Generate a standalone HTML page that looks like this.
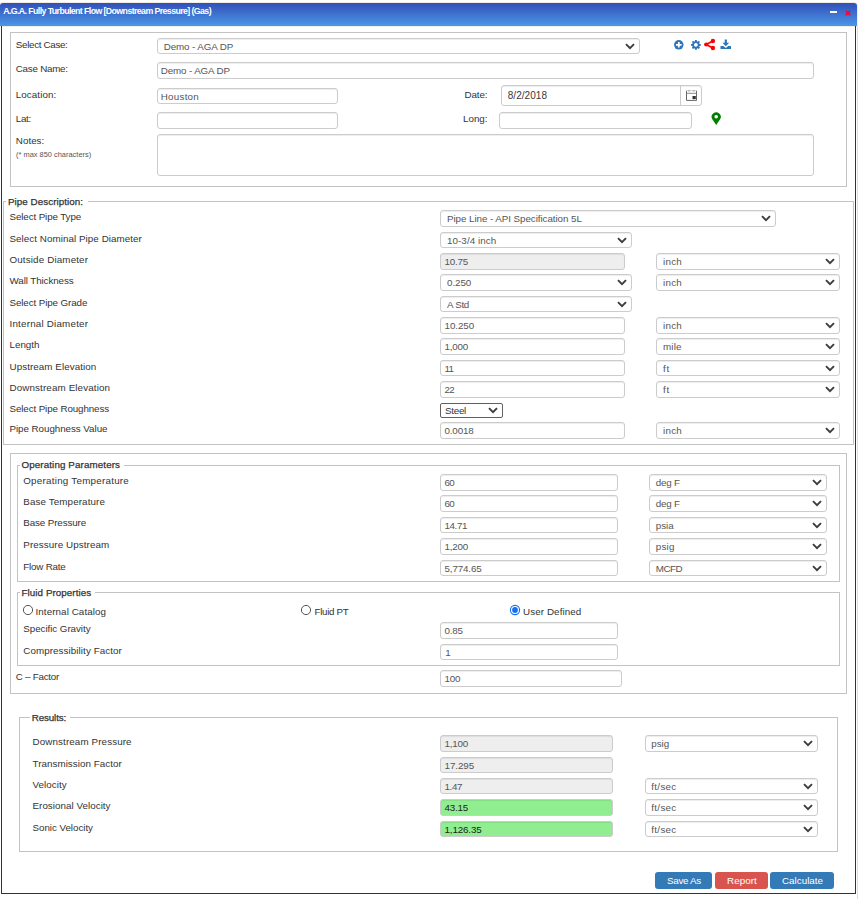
<!DOCTYPE html>
<html><head><meta charset="utf-8"><title>A.G.A. Fully Turbulent Flow</title><style>
html,body{margin:0;padding:0;background:#fff}
body{width:860px;height:899px;position:relative;overflow:hidden;font-family:"Liberation Sans",sans-serif;font-size:9.8px;line-height:12px;color:#333}
div,span,svg{position:absolute;box-sizing:border-box}
.t{white-space:nowrap;height:12px}
.lg{-webkit-text-stroke:0.25px #333}
.lgbg{height:1px;background:#fff}
.fs{border:1px solid #c3c3c3}
.in{border:1px solid #ccc;border-radius:3px;background:#fff;box-shadow:inset 0 1px 1px rgba(0,0,0,.075);overflow:hidden}
.in .v{white-space:nowrap;color:#555;height:12px}
.dis{background:#eee}
.grn{background:#90ee90}
.grn .v{color:#222}
.sm{border-color:#606060;border-radius:2px;box-shadow:none}
.sm .v{color:#333}
.se .cv{right:4.5px;top:4.4px}
.sm .cv{top:2.6px;right:4px}
.dv{left:178px;top:-1px;width:1px;height:22px;background:#ccc}
#tb{left:0;top:3px;width:857px;height:23px;border-radius:3px 3px 0 0;background:linear-gradient(#3250b8,#4b97e8);box-shadow:0 0 0 1px rgba(226,220,206,.55)}
#mn{left:830px;top:8px;width:7px;height:2px;background:#fff}
#cx{left:845px;top:6.6px}
#win{left:1px;top:26px;width:855px;height:868px;border:1px solid #333;border-top:none}
#gl{left:857px;top:26px;width:1px;height:873px;background:#dcdcdc}
.bt{top:872px;height:17px;border-radius:3px;color:#fff;text-align:center;font-size:10.6px;line-height:17px;white-space:nowrap}
.rd{overflow:visible}
</style></head><body>
<div id="tb"><div id="mn"></div><svg id="cx" viewBox="0 0 6 6" width="6" height="6"><path d="M0.9 0.9 L5.1 5.1 M5.1 0.9 L0.9 5.1" stroke="#ff0033" stroke-width="1.9" fill="none"/></svg></div>
<div id="win"></div>
<div class="t " style="left:3.2px;letter-spacing:-0.6px;top:5.3px;font-size:8.8px;color:#fff;font-weight:bold">A.G.A. Fully Turbulent Flow [Downstream Pressure] (Gas)</div>
<div id="gl"></div>
<div class="fs" style="left:10px;top:32px;width:837px;height:155px"></div>
<div class="t " style="left:15.8px;letter-spacing:-0.32px;top:38.8px">Select Case:</div>
<div class="in se" style="left:157px;top:38px;width:483px;height:16px"><span class="v" style="left:5.75px;top:1.8px;letter-spacing:-0.11px">Demo - AGA DP</span><svg class="cv" viewBox="0 0 10 7" width="10" height="7"><path d="M1 1.2 L5 5.2 L9 1.2" fill="none" stroke="#3c3c3c" stroke-width="1.9"/></svg></div>
<div class="t " style="left:15.8px;letter-spacing:-0.25px;top:62.8px">Case Name:</div>
<div class="in" style="left:157px;top:62px;width:657px;height:17px"><span class="v" style="left:2.8px;top:1.8px;letter-spacing:-0.13px">Demo - AGA DP</span></div>
<div class="t " style="left:15.8px;letter-spacing:0.08px;top:88.8px">Location:</div>
<div class="in" style="left:157px;top:88px;width:181px;height:16px"><span class="v" style="left:2.8px;top:1.8px;letter-spacing:0.24px">Houston</span></div>
<div class="t " style="right:372.5px;letter-spacing:-0.11px;margin-right:0.11px;top:88.8px">Date:</div>
<div class="in" style="left:501px;top:85px;width:201px;height:21px"><span class="v" style="font-size:10px;color:#383838;left:5.7px;top:3.8px;letter-spacing:0.05px">8/2/2018</span><div class="dv"></div></div>
<div class="t " style="left:15.8px;letter-spacing:-0.31px;top:112.8px">Lat:</div>
<div class="in" style="left:157px;top:112px;width:181px;height:17px"></div>
<div class="t " style="right:372.5px;letter-spacing:-0.01px;margin-right:0.01px;top:112.8px">Long:</div>
<div class="in" style="left:499px;top:112px;width:193px;height:17px"></div>
<div class="t " style="left:15.8px;letter-spacing:0.03px;top:134.8px">Notes:</div>
<div class="t " style="left:16px;letter-spacing:0.02px;top:148.8px;font-size:7.4px;color:#555">(* max 850 characters)</div>
<div class="in" style="left:157px;top:134px;width:657px;height:42px"></div>
<svg style="left:673px;top:39px" width="12" height="12" viewBox="0 0 12 12"><circle cx="5.8" cy="5.8" r="4.75" fill="#2e75b8"/><path d="M5.8 3 V8.6 M3 5.8 H8.6" stroke="#fff" stroke-width="1.7" fill="none"/></svg>
<svg style="left:689px;top:39px" width="14" height="12" viewBox="0 0 14 12"><path d="M5.90 2.29 L6.01 1.03 L7.79 1.03 L7.90 2.29 L8.75 2.64 L9.72 1.83 L10.97 3.08 L10.16 4.05 L10.51 4.90 L11.77 5.01 L11.77 6.79 L10.51 6.90 L10.16 7.75 L10.97 8.72 L9.72 9.97 L8.75 9.16 L7.90 9.51 L7.79 10.77 L6.01 10.77 L5.90 9.51 L5.05 9.16 L4.08 9.97 L2.83 8.72 L3.64 7.75 L3.29 6.90 L2.03 6.79 L2.03 5.01 L3.29 4.90 L3.64 4.05 L2.83 3.08 L4.08 1.83 L5.05 2.64 Z M6.90 4.00 a1.9 1.9 0 1 0 0.01 0 Z" fill="#2e75b8" fill-rule="evenodd"/></svg>
<svg style="left:703px;top:38px" width="14" height="13" viewBox="0 0 14 13"><g fill="#ff0000" stroke="#ff0000"><path d="M9.9 3 L3.1 6.5 L9.9 10" fill="none" stroke-width="1.8"/><circle cx="3.2" cy="6.5" r="2.1" stroke="none"/><circle cx="9.9" cy="3" r="2.2" stroke="none"/><circle cx="9.9" cy="10" r="2.2" stroke="none"/></g></svg>
<svg style="left:720px;top:39px" width="12" height="11" viewBox="0 0 12 11"><g fill="#2e75b8"><path d="M4.7 0.5 H6.9 V3.8 H9.2 L5.8 7.2 L2.4 3.8 H4.7 Z"/><path d="M0.5 7 H3.4 L5.8 8.9 L8.2 7 H11 V10 H0.5 Z"/></g></svg>
<svg style="left:685px;top:89px" width="14" height="14" viewBox="0 0 14 14"><g fill="none" stroke="#666" stroke-width="1"><path d="M1.5 1.7 V11.4 H11.5 V1.7"/><path d="M1.5 4.3 H11.5" stroke="#888"/><path d="M3 1.7 H5.2 M7.8 1.7 H10" stroke="#666"/><path d="M1.5 1.7 H11.5" stroke="#ccc" stroke-width="0.8"/></g><rect x="7.5" y="7" width="3.3" height="3.1" fill="#333"/></svg>
<svg style="left:710px;top:111px" width="13" height="15" viewBox="0 0 13 15"><path d="M6.20 13.90 L2.48 8.62 A4.55 4.55 0 1 1 9.92 8.62 Z M6.20 3.95 a1.75 1.75 0 1 0 0.01 0 Z" fill="#008000" fill-rule="evenodd"/></svg>
<div class="fs" style="left:3px;top:201px;width:851px;height:244px"></div>
<div class="lgbg" style="left:5.9px;top:201px;width:82px"></div>
<div class="t lg" style="left:7.9px;letter-spacing:0.07px;top:195.8px">Pipe Description:</div>
<div class="t " style="left:9.5px;letter-spacing:-0.11px;top:210.8px">Select Pipe Type</div>
<div class="t " style="left:9.5px;letter-spacing:0.06px;top:232.8px">Select Nominal Pipe Diameter</div>
<div class="t " style="left:9.5px;letter-spacing:0.15px;top:253.8px">Outside Diameter</div>
<div class="t " style="left:9.5px;letter-spacing:-0.09px;top:274.8px">Wall Thickness</div>
<div class="t " style="left:9.5px;letter-spacing:-0.1px;top:296.8px">Select Pipe Grade</div>
<div class="t " style="left:9.5px;letter-spacing:0.21px;top:317.8px">Internal Diameter</div>
<div class="t " style="left:9.5px;letter-spacing:0px;top:338.8px">Length</div>
<div class="t " style="left:9.5px;letter-spacing:0.07px;top:360.8px">Upstream Elevation</div>
<div class="t " style="left:9.5px;letter-spacing:0.13px;top:381.8px">Downstream Elevation</div>
<div class="t " style="left:9.5px;letter-spacing:-0.11px;top:402.8px">Select Pipe Roughness</div>
<div class="t " style="left:9.5px;letter-spacing:-0.05px;top:422.8px">Pipe Roughness Value</div>
<div class="in se" style="left:440px;top:210px;width:336px;height:17px"><span class="v" style="left:6px;top:1.8px;letter-spacing:-0.06px">Pipe Line - API Specification 5L</span><svg class="cv" viewBox="0 0 10 7" width="10" height="7"><path d="M1 1.2 L5 5.2 L9 1.2" fill="none" stroke="#3c3c3c" stroke-width="1.9"/></svg></div>
<div class="in se" style="left:440px;top:232px;width:192px;height:16px"><span class="v" style="left:6px;top:1.8px;letter-spacing:0.07px">10-3/4 inch</span><svg class="cv" viewBox="0 0 10 7" width="10" height="7"><path d="M1 1.2 L5 5.2 L9 1.2" fill="none" stroke="#3c3c3c" stroke-width="1.9"/></svg></div>
<div class="in dis" style="left:440px;top:253px;width:185px;height:17px"><span class="v" style="left:3.5px;top:1.8px;letter-spacing:-0.2px">10.75</span></div>
<div class="in se" style="left:656px;top:253px;width:184px;height:17px"><span class="v" style="left:6px;top:1.8px;letter-spacing:0.26px">inch</span><svg class="cv" viewBox="0 0 10 7" width="10" height="7"><path d="M1 1.2 L5 5.2 L9 1.2" fill="none" stroke="#3c3c3c" stroke-width="1.9"/></svg></div>
<div class="in se" style="left:440px;top:274px;width:192px;height:17px"><span class="v" style="left:6px;top:1.8px;letter-spacing:-0.07px">0.250</span><svg class="cv" viewBox="0 0 10 7" width="10" height="7"><path d="M1 1.2 L5 5.2 L9 1.2" fill="none" stroke="#3c3c3c" stroke-width="1.9"/></svg></div>
<div class="in se" style="left:656px;top:274px;width:184px;height:17px"><span class="v" style="left:6px;top:1.8px;letter-spacing:0.26px">inch</span><svg class="cv" viewBox="0 0 10 7" width="10" height="7"><path d="M1 1.2 L5 5.2 L9 1.2" fill="none" stroke="#3c3c3c" stroke-width="1.9"/></svg></div>
<div class="in se" style="left:440px;top:296px;width:192px;height:16px"><span class="v" style="left:6px;top:1.8px;letter-spacing:-0.29px">A Std</span><svg class="cv" viewBox="0 0 10 7" width="10" height="7"><path d="M1 1.2 L5 5.2 L9 1.2" fill="none" stroke="#3c3c3c" stroke-width="1.9"/></svg></div>
<div class="in" style="left:440px;top:317px;width:185px;height:17px"><span class="v" style="left:3.5px;top:1.8px;letter-spacing:-0.05px">10.250</span></div>
<div class="in se" style="left:656px;top:317px;width:184px;height:17px"><span class="v" style="left:6px;top:1.8px;letter-spacing:0.26px">inch</span><svg class="cv" viewBox="0 0 10 7" width="10" height="7"><path d="M1 1.2 L5 5.2 L9 1.2" fill="none" stroke="#3c3c3c" stroke-width="1.9"/></svg></div>
<div class="in" style="left:440px;top:338px;width:185px;height:17px"><span class="v" style="left:3.5px;top:1.8px;letter-spacing:-0.2px">1,000</span></div>
<div class="in se" style="left:656px;top:338px;width:184px;height:17px"><span class="v" style="left:6px;top:1.8px;letter-spacing:0.17px">mile</span><svg class="cv" viewBox="0 0 10 7" width="10" height="7"><path d="M1 1.2 L5 5.2 L9 1.2" fill="none" stroke="#3c3c3c" stroke-width="1.9"/></svg></div>
<div class="in" style="left:440px;top:360px;width:185px;height:16px"><span class="v" style="left:3.5px;top:1.8px;letter-spacing:-0.6px">11</span></div>
<div class="in se" style="left:656px;top:360px;width:184px;height:16px"><span class="v" style="left:6px;top:1.8px;letter-spacing:0.8px">ft</span><svg class="cv" viewBox="0 0 10 7" width="10" height="7"><path d="M1 1.2 L5 5.2 L9 1.2" fill="none" stroke="#3c3c3c" stroke-width="1.9"/></svg></div>
<div class="in" style="left:440px;top:381px;width:185px;height:17px"><span class="v" style="left:3.5px;top:1.8px;letter-spacing:-0.6px">22</span></div>
<div class="in se" style="left:656px;top:381px;width:184px;height:17px"><span class="v" style="left:6px;top:1.8px;letter-spacing:0.8px">ft</span><svg class="cv" viewBox="0 0 10 7" width="10" height="7"><path d="M1 1.2 L5 5.2 L9 1.2" fill="none" stroke="#3c3c3c" stroke-width="1.9"/></svg></div>
<div class="in se sm" style="left:440px;top:403px;width:63px;height:15px"><span class="v" style="left:4px;top:0.8px;letter-spacing:-0.27px">Steel</span><svg class="cv" viewBox="0 0 10 7" width="10" height="7"><path d="M1 1.2 L5 5.2 L9 1.2" fill="none" stroke="#3c3c3c" stroke-width="1.9"/></svg></div>
<div class="in" style="left:440px;top:422px;width:185px;height:17px"><span class="v" style="left:3.5px;top:1.8px;letter-spacing:-0.15px">0.0018</span></div>
<div class="in se" style="left:656px;top:422px;width:184px;height:17px"><span class="v" style="left:6px;top:1.8px;letter-spacing:0.26px">inch</span><svg class="cv" viewBox="0 0 10 7" width="10" height="7"><path d="M1 1.2 L5 5.2 L9 1.2" fill="none" stroke="#3c3c3c" stroke-width="1.9"/></svg></div>
<div class="fs" style="left:10px;top:453px;width:837px;height:241px"></div>
<div class="fs" style="left:17px;top:465px;width:823px;height:117px"></div>
<div class="lgbg" style="left:19.5px;top:465px;width:104.5px"></div>
<div class="t lg" style="left:21.5px;letter-spacing:0.11px;top:458.8px">Operating Parameters</div>
<div class="t " style="left:23.25px;letter-spacing:0.25px;top:474.8px">Operating Temperature</div>
<div class="t " style="left:23.25px;letter-spacing:0.12px;top:495.8px">Base Temperature</div>
<div class="t " style="left:23.25px;letter-spacing:-0.11px;top:516.8px">Base Pressure</div>
<div class="t " style="left:23.25px;letter-spacing:0.1px;top:538.8px">Pressure Upstream</div>
<div class="t " style="left:23.25px;letter-spacing:-0.2px;top:560.8px">Flow Rate</div>
<div class="in" style="left:440px;top:474px;width:178px;height:17px"><span class="v" style="left:3.5px;top:1.8px;letter-spacing:-0.6px">60</span></div>
<div class="in se" style="left:649px;top:474px;width:178px;height:17px"><span class="v" style="left:5.75px;top:1.8px;letter-spacing:-0.2px">deg F</span><svg class="cv" viewBox="0 0 10 7" width="10" height="7"><path d="M1 1.2 L5 5.2 L9 1.2" fill="none" stroke="#3c3c3c" stroke-width="1.9"/></svg></div>
<div class="in" style="left:440px;top:495px;width:178px;height:17px"><span class="v" style="left:3.5px;top:1.8px;letter-spacing:-0.6px">60</span></div>
<div class="in se" style="left:649px;top:495px;width:178px;height:17px"><span class="v" style="left:5.75px;top:1.8px;letter-spacing:-0.2px">deg F</span><svg class="cv" viewBox="0 0 10 7" width="10" height="7"><path d="M1 1.2 L5 5.2 L9 1.2" fill="none" stroke="#3c3c3c" stroke-width="1.9"/></svg></div>
<div class="in" style="left:440px;top:517px;width:178px;height:16px"><span class="v" style="left:3.5px;top:1.8px;letter-spacing:-0.39px">14.71</span></div>
<div class="in se" style="left:649px;top:517px;width:178px;height:16px"><span class="v" style="left:5.75px;top:1.8px;letter-spacing:-0.01px">psia</span><svg class="cv" viewBox="0 0 10 7" width="10" height="7"><path d="M1 1.2 L5 5.2 L9 1.2" fill="none" stroke="#3c3c3c" stroke-width="1.9"/></svg></div>
<div class="in" style="left:440px;top:538px;width:178px;height:17px"><span class="v" style="left:3.5px;top:1.8px;letter-spacing:-0.2px">1,200</span></div>
<div class="in se" style="left:649px;top:538px;width:178px;height:17px"><span class="v" style="left:5.75px;top:1.8px;letter-spacing:0.26px">psig</span><svg class="cv" viewBox="0 0 10 7" width="10" height="7"><path d="M1 1.2 L5 5.2 L9 1.2" fill="none" stroke="#3c3c3c" stroke-width="1.9"/></svg></div>
<div class="in" style="left:440px;top:560px;width:178px;height:16px"><span class="v" style="left:3.5px;top:1.8px;letter-spacing:-0.13px">5,774.65</span></div>
<div class="in se" style="left:649px;top:560px;width:178px;height:16px"><span class="v" style="left:5.75px;top:1.8px;letter-spacing:-0.52px">MCFD</span><svg class="cv" viewBox="0 0 10 7" width="10" height="7"><path d="M1 1.2 L5 5.2 L9 1.2" fill="none" stroke="#3c3c3c" stroke-width="1.9"/></svg></div>
<div class="fs" style="left:17px;top:592px;width:823px;height:74px"></div>
<div class="lgbg" style="left:19.5px;top:592px;width:75.5px"></div>
<div class="t lg" style="left:21.5px;letter-spacing:0.07px;top:586.8px">Fluid Properties</div>
<svg class="rd" style="left:22px;top:604px" width="12" height="12" viewBox="0 0 12 12"><circle cx="6" cy="6" r="4.6" fill="#fff" stroke="#555" stroke-width="1"/></svg>
<div class="t " style="left:35.5px;letter-spacing:0.09px;top:605.8px">Internal Catalog</div>
<svg class="rd" style="left:299.75px;top:604px" width="12" height="12" viewBox="0 0 12 12"><circle cx="6" cy="6" r="4.6" fill="#fff" stroke="#555" stroke-width="1"/></svg>
<div class="t " style="left:314.5px;letter-spacing:-0.32px;top:605.8px">Fluid PT</div>
<svg class="rd" style="left:508.75px;top:604px" width="12" height="12" viewBox="0 0 12 12"><circle cx="6" cy="6" r="4.6" fill="#fff" stroke="#1470f2" stroke-width="1.1"/><circle cx="6" cy="6" r="2.9" fill="#1470f2"/></svg>
<div class="t " style="left:523px;letter-spacing:0.1px;top:605.8px">User Defined</div>
<div class="t " style="left:23.25px;letter-spacing:-0.05px;top:622.8px">Specific Gravity</div>
<div class="in" style="left:440px;top:622px;width:178px;height:17px"><span class="v" style="left:3.5px;top:1.8px;letter-spacing:-0.19px">0.85</span></div>
<div class="t " style="left:23.25px;letter-spacing:0.08px;top:644.8px">Compressibility Factor</div>
<div class="in" style="left:440px;top:644px;width:178px;height:16px"><span class="v" style="left:4.3px;top:1.8px;letter-spacing:-0.6px">1</span></div>
<div class="t " style="left:15.75px;letter-spacing:-0.25px;top:670.8px">C – Factor</div>
<div class="in" style="left:440px;top:670px;width:182px;height:17px"><span class="v" style="left:3.5px;top:1.8px;letter-spacing:-0.18px">100</span></div>
<div class="fs" style="left:19px;top:717px;width:819px;height:135px"></div>
<div class="lgbg" style="left:29.75px;top:717px;width:40.5px"></div>
<div class="t lg" style="left:31.75px;letter-spacing:-0.13px;top:711.8px">Results:</div>
<div class="t " style="left:32.5px;letter-spacing:0.12px;top:735.8px">Downstream Pressure</div>
<div class="t " style="left:32.5px;letter-spacing:0.05px;top:757.8px">Transmission Factor</div>
<div class="t " style="left:32.5px;letter-spacing:0.07px;top:778.8px">Velocity</div>
<div class="t " style="left:32.5px;letter-spacing:0.04px;top:799.8px">Erosional Velocity</div>
<div class="t " style="left:32.5px;letter-spacing:-0.04px;top:821.8px">Sonic Velocity</div>
<div class="in dis" style="left:440px;top:735px;width:173px;height:17px"><span class="v" style="left:3.5px;top:1.8px;letter-spacing:-0.2px">1,100</span></div>
<div class="in se" style="left:645px;top:735px;width:173px;height:17px"><span class="v" style="left:5.25px;top:1.8px;letter-spacing:0.01px">psig</span><svg class="cv" viewBox="0 0 10 7" width="10" height="7"><path d="M1 1.2 L5 5.2 L9 1.2" fill="none" stroke="#3c3c3c" stroke-width="1.9"/></svg></div>
<div class="in dis" style="left:440px;top:757px;width:173px;height:16px"><span class="v" style="left:3.5px;top:1.8px;letter-spacing:-0.05px">17.295</span></div>
<div class="in dis" style="left:440px;top:778px;width:173px;height:16px"><span class="v" style="left:3.5px;top:1.8px;letter-spacing:-0.35px">1.47</span></div>
<div class="in se" style="left:645px;top:778px;width:173px;height:16px"><span class="v" style="left:5.25px;top:1.8px;letter-spacing:0.32px">ft/sec</span><svg class="cv" viewBox="0 0 10 7" width="10" height="7"><path d="M1 1.2 L5 5.2 L9 1.2" fill="none" stroke="#3c3c3c" stroke-width="1.9"/></svg></div>
<div class="in grn" style="left:440px;top:799px;width:173px;height:17px"><span class="v" style="left:3.5px;top:1.8px;letter-spacing:-0.2px">43.15</span></div>
<div class="in se" style="left:645px;top:799px;width:173px;height:17px"><span class="v" style="left:5.25px;top:1.8px;letter-spacing:0.32px">ft/sec</span><svg class="cv" viewBox="0 0 10 7" width="10" height="7"><path d="M1 1.2 L5 5.2 L9 1.2" fill="none" stroke="#3c3c3c" stroke-width="1.9"/></svg></div>
<div class="in grn" style="left:440px;top:821px;width:173px;height:16px"><span class="v" style="left:3.5px;top:1.8px;letter-spacing:-0.13px">1,126.35</span></div>
<div class="in se" style="left:645px;top:821px;width:173px;height:16px"><span class="v" style="left:5.25px;top:1.8px;letter-spacing:0.32px">ft/sec</span><svg class="cv" viewBox="0 0 10 7" width="10" height="7"><path d="M1 1.2 L5 5.2 L9 1.2" fill="none" stroke="#3c3c3c" stroke-width="1.9"/></svg></div>
<div class="bt" style="left:655px;width:57px;background:#337ab7"></div>
<div class="bt" style="left:715px;width:53px;background:#d9534f"></div>
<div class="bt" style="left:770px;width:64px;background:#337ab7"></div>
<div class="t " style="left:667px;letter-spacing:-0.29px;top:874.8px;color:#fff">Save As</div>
<div class="t " style="left:727px;letter-spacing:0.07px;top:874.8px;color:#fff">Report</div>
<div class="t " style="left:782px;letter-spacing:0.02px;top:874.8px;color:#fff">Calculate</div>
</body></html>
